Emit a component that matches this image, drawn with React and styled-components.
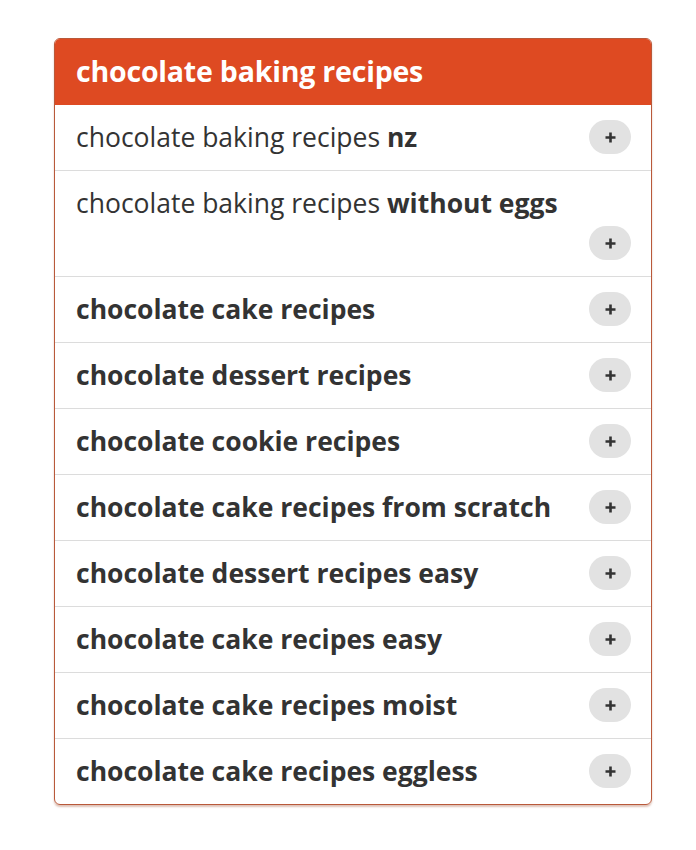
import React from "react";
import styled, { createGlobalStyle } from "styled-components";

const GlobalStyle = createGlobalStyle`
  body {
    margin: 0;
    background: #fff;
    font-family: "Open Sans", "Noto Sans", sans-serif;
  }
`;

const Page = styled.div`
  padding: 38px 44px 40px 54px;
`;

const Card = styled.div`
  width: 598px;
  box-sizing: border-box;
  border: 1px solid #b9593a;
  border-radius: 6px;
  overflow: hidden;
  box-shadow: 0 2px 2px rgba(160, 80, 50, 0.35);
`;

const Header = styled.div`
  background: #de4a22;
  color: #fff;
  font-weight: 700;
  font-size: 28.5px;
  line-height: 34px;
  letter-spacing: -0.2px;
  padding: 15px 21px 17px;
`;

const Row = styled.div`
  display: flex;
  flex-wrap: wrap;
  align-items: center;
  row-gap: 6px;
  padding: 15px 20px 16px 21px;
  border-top: ${(p) => (p.first ? "none" : "1px solid #dcdcdc")};
`;

const Label = styled.span`
  font-size: 26.5px;
  line-height: 34px;
  color: #333;
  font-weight: ${(p) => (p.bold ? 700 : 400)};
  flex-basis: ${(p) => (p.full ? "100%" : "auto")};

  b {
    font-weight: 700;
  }
`;

const AddButton = styled.button`
  margin-left: auto;
  flex: none;
  width: 42px;
  height: 34px;
  border: none;
  border-radius: 17px;
  background: #e2e2e2;
  display: flex;
  align-items: center;
  justify-content: center;
  padding: 0;
  cursor: pointer;
`;

const PlusIcon = () => (
  <svg width="11" height="11" viewBox="0 0 11 11">
    <path d="M5.5 0.5v10M0.5 5.5h10" stroke="#333" strokeWidth="2.6" />
  </svg>
);

const rows = [
  { base: "chocolate baking recipes ", extra: "nz" },
  { base: "chocolate baking recipes ", extra: "without eggs", full: true },
  { bold: "chocolate cake recipes" },
  { bold: "chocolate dessert recipes" },
  { bold: "chocolate cookie recipes" },
  { bold: "chocolate cake recipes from scratch" },
  { bold: "chocolate dessert recipes easy" },
  { bold: "chocolate cake recipes easy" },
  { bold: "chocolate cake recipes moist" },
  { bold: "chocolate cake recipes eggless" },
];

export default function App() {
  return (
    <>
      <GlobalStyle />
      <Page>
        <Card>
          <Header>chocolate baking recipes</Header>
          {rows.map((r, i) => (
            <Row key={i} first={i === 0}>
              {r.bold ? (
                <Label bold>{r.bold}</Label>
              ) : (
                <Label full={r.full}>
                  {r.base}
                  <b>{r.extra}</b>
                </Label>
              )}
              <AddButton aria-label="add">
                <PlusIcon />
              </AddButton>
            </Row>
          ))}
        </Card>
      </Page>
    </>
  );
}
